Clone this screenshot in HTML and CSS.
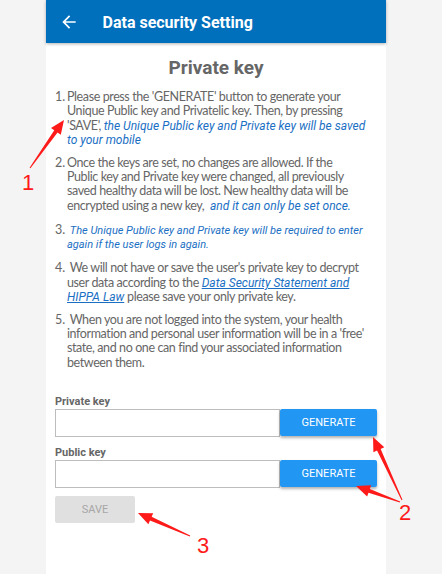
FILE: index.html
```html
<!DOCTYPE html>
<html>
<head>
<meta charset="utf-8">
<link rel="stylesheet" href="styles.css">
</head>
<body>
<div class="phone">
  <header class="appbar">
    <svg class="back" width="20" height="20" viewBox="0 0 24 24"><path fill="#fff" d="M20 11H7.83l5.59-5.59L12 4l-8 8 8 8 1.41-1.41L7.83 13H20v-2z"/></svg>
    <span class="apptitle">Data security Setting</span>
  </header>
  <main class="content">
    <h1 class="title">Private key</h1>
    <ol class="list">
      <li><span class="num">1.</span><p>Please press the 'GENERATE' button to generate your<br>Unique Public key and Privatelic key. Then, by pressing<br>'SAVE', <em class="hl">the Unique Public key and Private key will be saved<br>to your mobile</em></p></li>
      <li><span class="num">2.</span><p>Once the keys are set, no changes are allowed. If the<br>Public key and Private key were changed, all previously<br>saved healthy data will be lost. New healthy data will be<br>encrypted using a new key, &nbsp;<em class="hl">and it can only be set once.</em></p></li>
      <li class="l3"><span class="num">3.</span><p>&nbsp;<em class="hl sm">The Unique Public key and Private key will be required to enter<br>again if the user logs in again.</em></p></li>
      <li><span class="num">4.</span><p>&nbsp;We will not have or save the user's private key to decrypt<br>user data according to the <a class="link">Data Security Statement and<br>HIPPA Law</a> please save your only private key.</p></li>
      <li><span class="num">5.</span><p>&nbsp;When you are not logged into the system, your health<br>information and personal user information will be in a 'free'<br>state, and no one can find your associated information<br>between them.</p></li>
    </ol>
    <div class="field first">
      <label class="label">Private key</label>
      <div class="row"><div class="input"></div><button class="gen">GENERATE</button></div>
    </div>
    <div class="field">
      <label class="label">Public key</label>
      <div class="row"><div class="input"></div><button class="gen">GENERATE</button></div>
    </div>
    <button class="save">SAVE</button>
  </main>
</div>
<svg class="annot" width="442" height="574" viewBox="0 0 442 574">
  <g fill="#ff1a1a">
    <polygon points="30.41,168.29 57.53,132.56 60.8,134.87 64,120 51.0,127.93 54.27,130.24 29.59,167.71"/>
    <polygon points="402.45,499.79 380.67,448.88 384.3,447.21 373,437 373.4,452.23 377.03,450.56 401.55,500.21"/>
    <polygon points="400.17,501.53 369.84,488.91 371.21,485.15 356,486 367.11,496.43 368.48,492.67 399.83,502.47"/>
    <polygon points="190.2,535.54 151.61,516.83 153.23,513.17 138,513 148.37,524.15 149.99,520.49 189.8,536.46"/>
    <text x="22" y="190" class="an">1</text>
    <text x="399" y="520" class="an">2</text>
    <text x="197" y="553" class="an">3</text>
  </g>
</svg>
</body>
</html>
```
FILE: styles.css
```css
html, body {
  margin: 0;
  padding: 0;
  background: #f4f4f4;
  height: 574px;
  overflow: hidden;
}
body {
  position: relative;
  font-family: Lato, sans-serif;
}
.phone {
  margin-left: 46px;
  width: 340px;
  height: 574px;
  background: #fff;
}
.appbar {
  height: 43px;
  background: #0070bd;
  display: flex;
  align-items: center;
  box-shadow: 0 1px 3px rgba(0,0,0,0.3);
  position: relative;
}
.back {
  margin-left: 12.5px;
  margin-right: 24px;
}
.apptitle {
  font-family: Roboto, sans-serif;
  font-weight: 700;
  font-size: 16px;
  color: #fff;
  margin-top: 1px;
}
.content {
  padding: 0 9px;
}
.title {
  margin: 12px 0 0;
  text-align: center;
  font-family: Roboto, sans-serif;
  font-weight: 700;
  font-size: 19px;
  line-height: 26px;
  color: #666;
}
.list {
  list-style: none;
  margin: 9px 0 0;
  padding: 0;
  font-size: 12.5px;
  letter-spacing: -0.4px;
  line-height: 14.3px;
  color: #666;
  white-space: nowrap;
}
.list li {
  display: flex;
  margin-bottom: 8.5px;
}
.list li.l3 {
  line-height: 13px;
  margin-top: 10.3px;
  margin-bottom: 10.3px;
}
.num {
  width: 12px;
  flex: none;
  letter-spacing: 0;
}
.list p {
  margin: 0;
}
.hl {
  color: #1a6fc4;
  font-style: italic;
  font-family: Roboto, sans-serif;
  font-size: 12px;
  letter-spacing: 0;
}
.hl.sm {
  font-size: 11px;
}
.link {
  color: #1a6fc4;
  font-style: italic;
  font-family: Roboto, sans-serif;
  font-size: 12px;
  letter-spacing: 0;
  text-decoration: underline;
}
.field.first {
  margin-top: 25px;
}
.label {
  display: block;
  font-family: Roboto, sans-serif;
  font-weight: 700;
  font-size: 11px;
  line-height: 14px;
  color: #666;
}
.field + .field .label {
  margin-top: 9px;
}
.row {
  display: flex;
  height: 28px;
}
.input {
  flex: 1;
  border: 1px solid #bdbdbd;
  box-sizing: border-box;
  background: #fff;
}
.gen {
  width: 97px;
  height: 27px;
  border: none;
  border-radius: 2px;
  background: #2196f3;
  color: #fff;
  font-family: Roboto, sans-serif;
  font-size: 11px;
  box-shadow: 0 2px 3px rgba(0,0,0,0.3);
  padding: 0;
}
.save {
  margin-top: 8px;
  width: 80px;
  height: 27px;
  border: none;
  border-radius: 2px;
  background: #e0e0e0;
  color: #a6a6a6;
  font-family: Roboto, sans-serif;
  font-size: 11px;
  padding: 0;
}
.annot {
  position: absolute;
  left: 0;
  top: 0;
  pointer-events: none;
}
.an {
  font-family: "Liberation Sans", sans-serif;
  font-size: 22px;
}
```
